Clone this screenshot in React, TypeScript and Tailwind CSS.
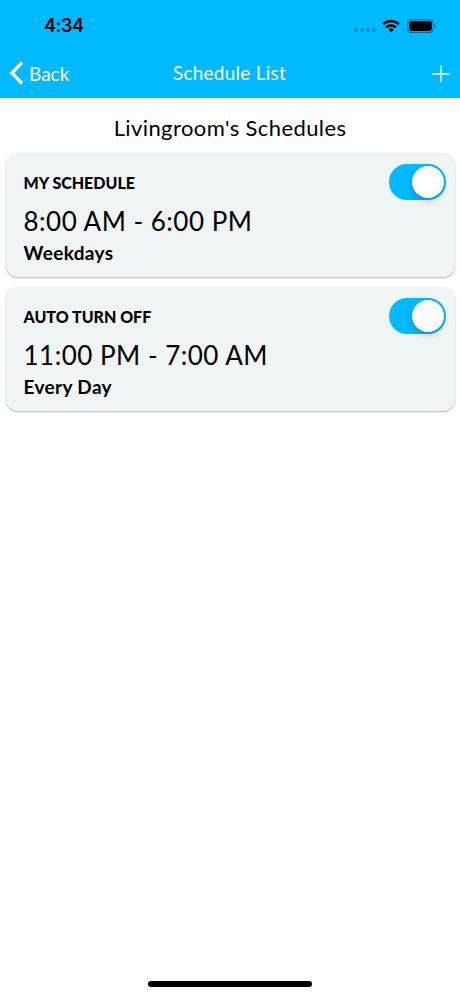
const schedules = [
  { title: "MY SCHEDULE", time: "8:00 AM - 6:00 PM", days: "Weekdays" },
  { title: "AUTO TURN OFF", time: "11:00 PM - 7:00 AM", days: "Every Day" },
];

type Schedule = (typeof schedules)[number];

function WifiIcon() {
  return (
    <svg className="h-[14px] w-[18px]" viewBox="0 0 18 14" fill="none" stroke="#000" strokeWidth="2.5">
      <path d="M1.1 5.2a11.4 11.4 0 0 1 15.8 0" />
      <path d="M4 8.4a7.2 7.2 0 0 1 10 0" />
      <path d="M9 13.4 6.3 10.7a3.8 3.8 0 0 1 5.4 0Z" fill="#000" stroke="none" />
    </svg>
  );
}

function BatteryIcon() {
  return (
    <svg className="h-[14px] w-[30px]" viewBox="0 0 30 14">
      <rect x="0.6" y="0.6" width="25.8" height="12.8" rx="3.8" fill="none" stroke="#000" strokeOpacity="0.4" strokeWidth="1.1" />
      <rect x="2.1" y="2.1" width="22.8" height="9.8" rx="2.4" fill="#000" />
      <path d="M27.5 4.9a2.4 2.4 0 0 1 0 4.2Z" fill="#000" fillOpacity="0.45" />
    </svg>
  );
}

function StatusBar() {
  return (
    <div className="flex h-[50px] items-center justify-between pl-11 pr-[23.5px] pt-px">
      <span className="pt-px font-['Inter',sans-serif] text-[18px] font-semibold leading-5 tracking-[-0.4px] text-black">4:34</span>
      <div className="flex items-center">
        <div className="mr-[6px] mt-[9px] flex gap-[2px]">
          {[0, 1, 2, 3].map((dot) => (
            <span key={dot} className="h-1 w-1 rounded-full bg-black/25" />
          ))}
        </div>
        <WifiIcon />
        <div className="ml-[7px]">
          <BatteryIcon />
        </div>
      </div>
    </div>
  );
}

function NavBar() {
  return (
    <div className="grid h-12 grid-cols-[1fr_auto_1fr] items-center pl-[9px] pr-[10px] text-white">
      <button className="flex items-center text-left">
        <svg className="-mt-[3px] h-6 w-[15px]" viewBox="0 0 15 24" fill="none" stroke="currentColor" strokeWidth="3.4">
          <path d="M13 1.5 2.9 12 13 22.5" />
        </svg>
        <span className="ml-[5px] text-[19px] leading-6">Back</span>
      </button>
      <h1 className="-mt-[2px] text-[19px] leading-6 tracking-[0.25px]">Schedule List</h1>
      <button className="justify-self-end" aria-label="Add schedule">
        <svg className="h-[18px] w-[18px]" viewBox="0 0 18 18" fill="none" stroke="currentColor" strokeWidth="1.3">
          <path d="M9 0.5v17M0.5 9h17" />
        </svg>
      </button>
    </div>
  );
}

function Toggle() {
  return (
    <button role="switch" aria-checked="true" className="flex h-9 w-[57px] shrink-0 items-center justify-end rounded-full bg-[#00b9ff] pr-[2px]">
      <span className="h-8 w-8 rounded-full bg-white shadow-[0_3px_6px_rgba(0,0,0,0.2)]" />
    </button>
  );
}

function ScheduleCard({ schedule }: { schedule: Schedule }) {
  return (
    <article className="flex h-[124px] items-start justify-between rounded-xl bg-[#eff4f5] pl-[18px] pr-[9px] pt-[11px] shadow-[0_1px_2px_rgba(0,0,0,0.3)]">
      <div className="whitespace-nowrap pt-[9px] text-black">
        <h3 className="text-[16px] font-black leading-5">{schedule.title}</h3>
        <p className="mt-[10px] text-[26px] leading-[36px] tracking-[0.5px]">{schedule.time}</p>
        <p className="mt-[2px] text-[19px] font-bold leading-6 tracking-[0.35px]">{schedule.days}</p>
      </div>
      <Toggle />
    </article>
  );
}

export default function App() {
  return (
    <div className="flex h-[996px] w-[460px] flex-col overflow-hidden bg-white font-['Lato','Open_Sans',sans-serif]">
      <header className="h-[98px] bg-[#00b9ff]">
        <StatusBar />
        <NavBar />
      </header>
      <main className="flex-1 pl-[5.5px] pr-[5.5px]">
        <h2 className="pt-[16px] text-center text-[22px] leading-7 tracking-[0.4px] text-black">Livingroom's Schedules</h2>
        <div className="mt-[11px] flex flex-col gap-[10.4px]">
          {schedules.map((schedule) => (
            <ScheduleCard key={schedule.title} schedule={schedule} />
          ))}
        </div>
      </main>
      <div className="mx-auto mb-[9px] h-[6px] w-[164px] rounded-full bg-black" />
    </div>
  );
}
